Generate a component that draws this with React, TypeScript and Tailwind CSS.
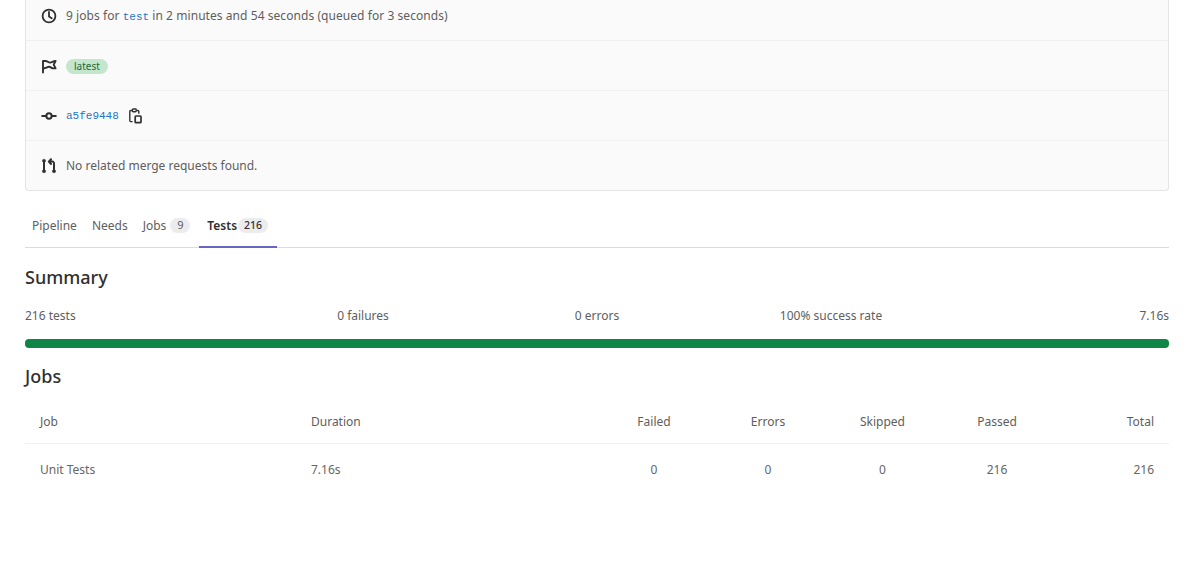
const Clock = () => (
  <svg width="16" height="16" viewBox="0 0 16 16" fill="none" stroke="#303030" strokeWidth="1.8">
    <circle cx="8" cy="8" r="6.4" />
    <path d="M8 4v4.4l2.7 1.9" strokeLinecap="round" strokeLinejoin="round" />
  </svg>
);
const Flag = () => (
  <svg width="16" height="16" viewBox="0 0 16 16" fill="none" stroke="#303030" strokeWidth="1.9">
    <path d="M2 14.5V3h2.5C6.6 3 7 4.6 9.2 4.6 11 4.6 12 3 14.6 3l-1.9 3.6 1.9 3.8h-2.2c-2 0-2.4-1.6-4.4-1.6C6 8.8 4.6 10.4 2 10.4" strokeLinejoin="round" strokeLinecap="round" />
  </svg>
);
const Commit = () => (
  <svg width="16" height="16" viewBox="0 0 16 16" fill="none" stroke="#303030" strokeWidth="2">
    <circle cx="8" cy="8" r="2.7" />
    <path d="M1.2 8h4M10.8 8h4" strokeLinecap="round" />
  </svg>
);
const Copy = () => (
  <svg width="13" height="16" viewBox="0 0 13 16" fill="none" stroke="#303030" strokeWidth="1.4">
    <path d="M3.6 13.6H1.7a.9.9 0 0 1-.9-.9V3.4a.9.9 0 0 1 .9-.9h1.2M8 2.5h.9a.9.9 0 0 1 .9.9v2.4" />
    <rect x="3.4" y="1" width="3.8" height="2.8" rx="0.7" />
    <rect x="6.2" y="8" width="5.8" height="6.6" rx="0.7" strokeWidth="1.7" />
  </svg>
);
const MergeRequest = () => (
  <svg width="16" height="16" viewBox="0 0 16 16" fill="none" stroke="#303030" strokeWidth="2">
    <path d="M3 3.5v9" />
    <circle cx="3" cy="2.8" r="1.6" fill="#303030" strokeWidth="0.5" />
    <circle cx="3" cy="13.2" r="1.6" fill="#303030" strokeWidth="0.5" />
    <circle cx="13" cy="13.2" r="1.6" fill="#303030" strokeWidth="0.5" />
    <path d="M13 12V5.4c0-1-.7-1.8-1.7-1.8H8.6M10 1.2 7.8 3.6 10 6" strokeLinecap="round" strokeLinejoin="round" />
  </svg>
);

const jobCols = "grid grid-cols-[271px_301px_114px_114px_115px_114px_115px]";

export default function App() {
  return (
    <div className="h-[576px] w-[1200px] overflow-hidden bg-white pr-[31px] pl-[25px] text-[12px] text-[#5e5e5e] [font-family:'Noto_Sans',sans-serif]">
      <div className="h-[191px] rounded-b-[4px] border-x border-b border-[#e5e5e5] bg-[#fafafa]">
        <div className="flex h-[41px] items-center gap-[9px] border-b border-[#f0f0f0] pb-[8px] pl-[15px]">
          <span className="flex w-[16px] justify-center"><Clock /></span>
          <span className="pt-[1px] tracking-[0.06px]">
            9 jobs for <span className="text-[11px] tracking-normal text-[#1f75cb] [font-family:'Liberation_Mono',monospace]">test</span> in 2 minutes and 54 seconds (queued for 3 seconds)
          </span>
        </div>
        <div className="flex h-[50px] items-center gap-[9px] border-b border-[#f0f0f0] pt-[1px] pl-[15px]">
          <span className="flex w-[16px] justify-center"><Flag /></span>
          <span className="flex h-[15px] items-center rounded-full bg-[#c3e6cd] px-[8px] text-[10px] text-[#24663b]">latest</span>
        </div>
        <div className="flex h-[50px] items-center gap-[9px] border-b border-[#f0f0f0] pt-[1px] pl-[15px]">
          <span className="flex w-[16px] justify-center"><Commit /></span>
          <span className="text-[11px] text-[#1f75cb] [font-family:'Liberation_Mono',monospace]">a5fe9448</span>
          <span className="ml-[1px] flex"><Copy /></span>
        </div>
        <div className="flex h-[49px] items-center gap-[9px] pt-[1px] pl-[15px]">
          <span className="flex w-[16px] justify-center"><MergeRequest /></span>
          <span>No related merge requests found.</span>
        </div>
      </div>

      <div className="flex h-[57px] items-end border-b border-[#dcdcde] pl-[7px]">
        <span className="flex h-[43px] items-center">Pipeline</span>
        <span className="ml-[15px] flex h-[43px] items-center">Needs</span>
        <span className="ml-[15px] flex h-[43px] items-center gap-[4px]">
          Jobs
          <span className="flex h-[15px] w-[20px] items-center justify-center rounded-full bg-[#ececef] text-[11px]">9</span>
        </span>
        <span className="relative top-px ml-[9px] flex h-[43px] w-[78px] items-center gap-[1px] border-b-2 border-[#6666c4] pl-[8px] font-semibold text-[#303030]">
          Tests
          <span className="flex h-[15px] w-[30px] items-center justify-center rounded-full bg-[#ececef] text-[10.5px] font-medium">216</span>
        </span>
      </div>

      <h2 className="mt-[15px] text-[18px] leading-[28px] font-medium text-[#303030]">Summary</h2>
      <div className="mt-[15px] grid h-[20px] grid-cols-[1fr_234px_234px_234px_1fr] items-center">
        <span>216 tests</span>
        <span className="text-center">0 failures</span>
        <span className="text-center">0 errors</span>
        <span className="text-center">100% success rate</span>
        <span className="text-right">7.16s</span>
      </div>
      <div className="mt-[13px] h-[9px] rounded-[4px] bg-[#108548]" />

      <h2 className="mt-[14px] text-[18px] leading-[28px] font-medium text-[#303030]">Jobs</h2>

      <div className={`${jobCols} mt-[12px] h-[42px] items-center border-b border-[#f0f0f0] pb-[1px]`}>
        <span className="pl-[15px]">Job</span>
        <span className="pl-[15px]">Duration</span>
        <span className="text-center">Failed</span>
        <span className="text-center">Errors</span>
        <span className="text-center">Skipped</span>
        <span className="text-center">Passed</span>
        <span className="pr-[15px] text-right">Total</span>
      </div>
      <div className={`${jobCols} h-[51px] items-center text-[#666666]`}>
        <span className="pl-[15px]">Unit Tests</span>
        <span className="pl-[15px]">7.16s</span>
        <span className="text-center">0</span>
        <span className="text-center">0</span>
        <span className="text-center">0</span>
        <span className="text-center">216</span>
        <span className="pr-[15px] text-right">216</span>
      </div>
    </div>
  );
}
